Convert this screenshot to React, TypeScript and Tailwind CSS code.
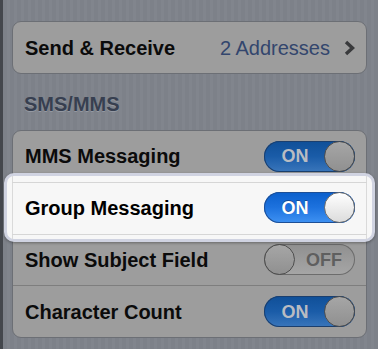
import React from 'react';

const font = "font-['Liberation_Sans',Arial,sans-serif]";

const Toggle = ({ on, lit }: { on: boolean; lit?: boolean }) => {
    const knob = (
        <div
            className={`w-[31px] h-[31px] shrink-0 rounded-full border ${
                lit
                    ? 'border-[#6f6f6f] bg-[linear-gradient(#ffffff,#dcdcdc)]'
                    : 'border-[#4e4e4e] bg-[linear-gradient(#a6a6a6,#909090)]'
            }`}
        />
    );
    if (on) {
        return (
            <div
                className={`w-[91px] h-[31px] rounded-full flex items-center ${
                    lit
                        ? 'bg-[linear-gradient(#0a5fcc_0%,#1d72de_50%,#3f92f3_100%)] shadow-[inset_0_0_0_1px_#1d4f96]'
                        : 'bg-[linear-gradient(#0f4f98_0%,#1a5ca8_50%,#3a76bb_100%)] shadow-[inset_0_0_0_1px_#1b3f6e]'
                }`}
            >
                <span
                    className={`flex-1 text-center pl-[2px] text-[18px] font-bold leading-none ${
                        lit ? 'text-white [text-shadow:0_-1px_0_#1a4a90]' : 'text-[#b9bcc2]'
                    }`}
                >
                    ON
                </span>
                {knob}
            </div>
        );
    }
    return (
        <div className="w-[91px] h-[31px] rounded-full flex items-center bg-[linear-gradient(#8f8f8f_0%,#9b9b9b_50%,#a6a6a6_100%)] shadow-[inset_0_0_0_1px_#6c6c6c]">
            {knob}
            <span className="flex-1 text-center pr-[2px] text-[18px] font-bold leading-none text-[#5f5f5f]">OFF</span>
        </div>
    );
};

const rowText = 'text-[20px] font-bold leading-none';

export default function App() {
    return (
        <div className={`${font} w-[378px] h-[349px] overflow-hidden border-l-[3px] border-[#44474d] pt-[21px] bg-[repeating-linear-gradient(90deg,#7d8189_0px,#7d8189_4px,#81858d_4px,#81858d_7px)]`}>
            {/* Send & Receive */}
            <div className="ml-[9px] mr-[11px] h-[53px] rounded-[9px] border border-[#6c6f75] bg-[#9d9d9d] flex items-center pl-[12px] pr-[11px]">
                <span className={`${rowText} text-[#0b0b0b]`}>Send &amp; Receive</span>
                <span className="ml-auto text-[20px] leading-none text-[#33466d]">2 Addresses</span>
                <svg width="11" height="16" viewBox="0 0 11 16" className="ml-[14px]">
                    <polyline points="2,2 8.5,8 2,14" fill="none" stroke="#393a3c" strokeWidth="3.4" />
                </svg>
            </div>

            <div className="mt-[18px] h-[24px] pl-[21px] text-[20px] font-bold leading-[24px] text-[#373f50] [text-shadow:0_1px_0_#959aa3]">
                SMS/MMS
            </div>

            {/* SMS/MMS group */}
            <div className="mt-[14px] ml-[9px] mr-[11px] rounded-[9px] border border-[#6c6f75] bg-[#9d9d9d]">
                <div className="h-[50px] flex items-center justify-between pl-[12px] pr-[11px]">
                    <span className={`${rowText} text-[#0b0b0b]`}>MMS Messaging</span>
                    <Toggle on />
                </div>
                <div className="relative h-[52px] border-t border-[#7e7e7e] flex items-center justify-between pl-[12px] pr-[11px]">
                    <div className="absolute -top-[9px] -bottom-[9px] -left-[9px] -right-[9px] rounded-[10px] border-[3px] border-[#d0d3e1] bg-[#f7f7f7] shadow-[0_1px_3px_rgba(0,0,0,0.35)]">
                        <div className="absolute left-[5px] right-[5px] inset-y-0 border-x border-[#dadada]" />
                        <div className="absolute left-[5px] right-[5px] top-[6px] h-[53px] border-y border-[#d6d6d6]" />
                    </div>
                    <span className={`relative ${rowText} text-black`}>Group Messaging</span>
                    <div className="relative">
                        <Toggle on lit />
                    </div>
                </div>
                <div className="h-[52px] border-t border-[#7e7e7e] flex items-center justify-between pl-[12px] pr-[11px]">
                    <span className={`${rowText} text-[#0b0b0b]`}>Show Subject Field</span>
                    <Toggle on={false} />
                </div>
                <div className="h-[52px] border-t border-[#7e7e7e] flex items-center justify-between pl-[12px] pr-[11px]">
                    <span className={`${rowText} text-[#0b0b0b]`}>Character Count</span>
                    <Toggle on />
                </div>
            </div>
        </div>
    );
}
